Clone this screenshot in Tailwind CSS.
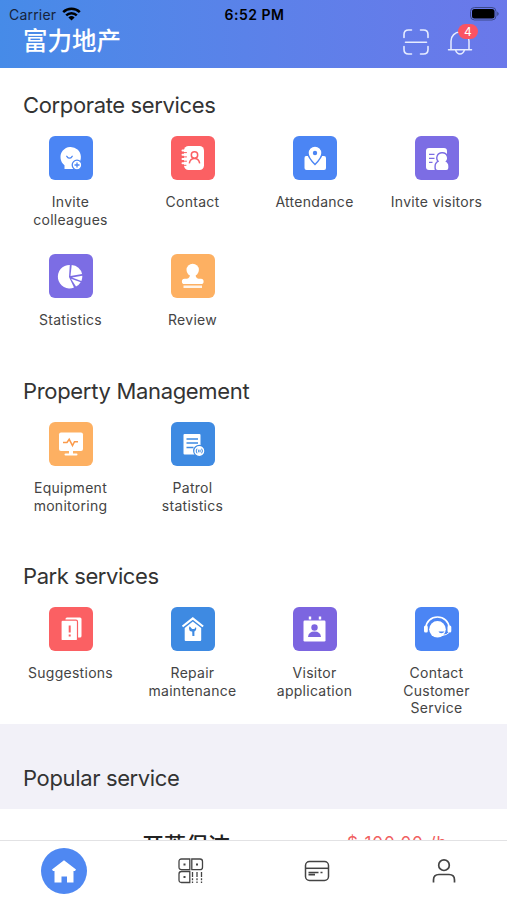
<!DOCTYPE html>
<html lang="en">
<head>
    <meta charset="UTF-8">
    <meta name="viewport" content="width=device-width, initial-scale=1.0">
    <title>富力地产</title>
    <script src="https://cdn.jsdelivr.net/npm/@tailwindcss/browser@4"></script>
</head>
<body class="bg-white font-['Inter','Noto_Sans_CJK_SC',sans-serif] text-[#333]">
    <div class="flex flex-col h-[900px] overflow-hidden">

        <!-- Header -->
        <header class="h-[68px] shrink-0 bg-linear-to-r from-[#468be8] to-[#6a78ea]">
            <div class="grid grid-cols-3 items-center h-7 pl-[9px] pr-[7px] text-black">
                <div class="flex items-center gap-1.5 text-[14px] tracking-[0.2px]">
                    <span class="text-[#16233c]">Carrier</span>
                    <svg class="w-[19px] h-[14px]" viewBox="0 0 19 14" fill="none" stroke="currentColor" stroke-width="2.5">
                        <path d="M1.2 5.2a11.8 11.8 0 0 1 16.6 0M4.2 8.4a7.6 7.6 0 0 1 10.6 0"/>
                        <path d="M9.5 13.6 6.4 10.5a4.5 4.5 0 0 1 6.2 0z" fill="currentColor" stroke="none"/>
                    </svg>
                </div>
                <div class="text-center text-[14px] font-semibold tracking-[0.5px]">6:52 PM</div>
                <svg class="justify-self-end w-[30px] h-[14px]" viewBox="0 0 30 14">
                    <rect x=".5" y=".5" width="25.5" height="12.5" rx="4" fill="none" stroke="#3c4a8c"/>
                    <rect x="2" y="2" width="22.5" height="9.5" rx="2.5"/>
                    <path d="M27.2 4.5q3 2.3 0 4.6z" fill="#3c4a8c"/>
                </svg>
            </div>
            <div class="flex items-center h-[27px] pl-[23px] pr-[34px] text-white">
                <h1 class="text-[24.5px] leading-[27px] font-medium">富力地产</h1>
                <svg class="ml-auto w-[26px] h-[26px]" viewBox="0 0 26 26" fill="none" stroke="#e6ecff" stroke-width="1.6" stroke-linecap="round">
                    <path d="M1 8.500V5.500q0-4.500 4.500-4.500H8.500M17.500 1H20.500q4.500 0 4.500 4.500V8.500M25 17.500V20.500q0 4.500-4.500 4.500H17.500M8.500 25H5.500Q1 25 1 20.500V17.500M2.500 13.300h21"/>
                </svg>
                <div class="relative ml-[18px]">
                    <svg class="w-[26px] h-[26px]" viewBox="0 0 26 26" fill="none" stroke="#e6ecff" stroke-width="1.5" stroke-linecap="round">
                        <path d="M1.500 20.700H24.500M4 20.500V12a9 9 0 0 1 18 0v8.500M8.500 21q1.500 4 4.500 4t4.500-4"/>
                    </svg>
                    <span class="absolute left-[11px] -top-[5px] w-5 h-[15px] rounded-full bg-[#fb5363] text-center text-[12px] leading-[15px]">4</span>
                </div>
            </div>
        </header>

        <!-- Services -->
        <main class="grow min-h-0 overflow-hidden">
            <section class="pt-[22px]">
                <h2 class="pl-[23px] text-[22px] leading-[30px] tracking-[-0.36px]">Corporate services</h2>
                <div class="grid grid-cols-4 gap-y-[26px] mt-4 mx-[9.5px] text-center text-[14px] leading-[17.5px] tracking-[0.28px] text-[#444]">
                    <div class="flex flex-col items-center gap-[13px]">
                        <svg class="w-11 h-11 rounded-md bg-[#4b85f4]" viewBox="0 0 44 44" fill="#fff">
                            <path d="M15.500 33v-3.800a10.200 10.200 0 1 1 13.500-1V33z"/>
                            <path d="M17.800 20.300q2.700 3.800 5.400 0" fill="none" stroke="#4b85f4" stroke-width="1.300" stroke-linecap="round"/>
                            <circle cx="28" cy="29" r="4.800" stroke="#4b85f4" stroke-width="1.300"/>
                            <path d="M25.500 29h5M28 26.500v5" stroke="#4b85f4" stroke-width="1.300"/>
                        </svg>
                        <span>Invite<br>colleagues</span>
                    </div>
                    <div class="flex flex-col items-center gap-[13px]">
                        <svg class="w-11 h-11 rounded-md bg-[#fb6063]" viewBox="0 0 44 44" fill="none" stroke="#fb6063">
                            <rect x="13" y="10" width="20" height="24" rx="4.500" fill="#fff" stroke="none"/>
                            <path d="M11.500 14.500h4M11.500 18.700h4M11.500 23h4M11.500 27.300h4" stroke="#fff" stroke-width="2" stroke-linecap="round"/>
                            <path d="M12 16.600h3.500M12 20.900h3.500M12 25.200h3.500M12 29.300h3" stroke-width="1" stroke-linecap="round"/>
                            <circle cx="23.500" cy="19" r="3.200" stroke-width="1.500"/>
                            <path d="M18.300 27.300q1-4.800 5.200-4.800t5.200 4.800" stroke-width="1.500"/>
                        </svg>
                        <span>Contact</span>
                    </div>
                    <div class="flex flex-col items-center gap-[13px]">
                        <svg class="w-11 h-11 rounded-md bg-[#4b85f4]" viewBox="0 0 44 44" fill="#fff">
                            <path d="M13 20h18q2 0 2 2v10q0 2-2 2H13.500q-2 0-2-2V22q0-2 1.500-2z"/>
                            <path d="M22 28.500q-7-7-7-11.500a7 7 0 0 1 14 0q0 4.500-7 11.500z" stroke="#4b85f4" stroke-width="1.400"/>
                            <circle cx="22" cy="17" r="2.200" fill="#4b85f4"/>
                        </svg>
                        <span>Attendance</span>
                    </div>
                    <div class="flex flex-col items-center gap-[13px]">
                        <svg class="w-11 h-11 rounded-md bg-[#7c6de4]" viewBox="0 0 44 44" fill="#fff">
                            <path d="M14 12h15q3 0 3 3v13l-6 6H14q-3 0-3-3V15q0-3 3-3z"/>
                            <path d="M14 18.300h5.500M14 22.300h5.500M14 26.300h3.500" stroke="#7c6de4" stroke-width="1.300"/>
                            <path d="M27.300 17.500a4.500 4.500 0 0 1 3 8q3 1.500 3 4.500v2q0 2-2 2h-8.500q-2 0-2-2v-2q0-3 3.400-4.500a4.500 4.500 0 0 1 3.100-8z" stroke="#7c6de4" stroke-width="2.800" paint-order="stroke"/>
                        </svg>
                        <span>Invite visitors</span>
                    </div>
                    <div class="flex flex-col items-center gap-[13px]">
                        <svg class="w-11 h-11 rounded-md bg-[#7c6de4]" viewBox="0 0 44 44" fill="#fff">
                            <path d="M20.800 11a11.700 11.700 0 1 0 4.200 22.500L20 23z"/>
                            <path d="M22.700 11a11.500 11.500 0 0 1 10.400 9L21.500 22z"/>
                            <path d="M33.300 21.700a11 11 0 0 1-.9 5.200L23 23.500z"/>
                            <path d="M31.700 28.200a11 11 0 0 1-4.700 4.300L22 24.700z"/>
                        </svg>
                        <span>Statistics</span>
                    </div>
                    <div class="flex flex-col items-center gap-[13px]">
                        <svg class="w-11 h-11 rounded-md bg-[#fdb062]" viewBox="0 0 44 44" fill="#fff">
                            <circle cx="21.700" cy="16" r="6.200"/>
                            <path d="M19 20h5.500q0 4.300 3 4.800H30a2.600 2.600 0 0 1 0 5.200H13.500a2.600 2.600 0 0 1 0-5.200H16q3-.5 3-4.800z"/>
                            <path d="M12.500 31.500h18.500v2.500h-18.500z" opacity=".85"/>
                        </svg>
                        <span>Review</span>
                    </div>
                </div>
            </section>

            <section class="pt-[47.5px]">
                <h2 class="pl-[23px] text-[22px] leading-[30px] tracking-[-0.32px]">Property Management</h2>
                <div class="grid grid-cols-4 mt-4 mx-[9.5px] text-center text-[14px] leading-[17.5px] tracking-[0.28px] text-[#444]">
                    <div class="flex flex-col items-center gap-[13px]">
                        <svg class="w-11 h-11 rounded-md bg-[#fdb062]" viewBox="0 0 44 44" fill="#fff">
                            <rect x="10" y="10.500" width="24" height="18.500" rx="2"/>
                            <path d="M20 29h4v2.500h3.500q1 0 1 1t-1 1h-11q-1 0-1-1t1-1H20z"/>
                            <path d="M14 20.500h4l2.200-3.200 3.300 6.400 2-4h3.500" fill="none" stroke="#fb9a4a" stroke-width="1.500"/>
                        </svg>
                        <span>Equipment<br>monitoring</span>
                    </div>
                    <div class="flex flex-col items-center gap-[13px]">
                        <svg class="w-11 h-11 rounded-md bg-[#3e8ae2]" viewBox="0 0 44 44" fill="#fff">
                            <rect x="12.500" y="12" width="17" height="20.500" rx="1"/>
                            <path d="M15.500 17h11.500M15.500 21h11.500M15.500 25.500h7" stroke="#3e8ae2" stroke-width="1.300"/>
                            <circle cx="28.300" cy="29" r="5.600" stroke="#3e8ae2" stroke-width="1.200"/>
                            <path d="M26 26.700q-1.700 2.300 0 4.600M30.600 26.700q1.700 2.300 0 4.600M27.700 27.700v2.600M29.100 27.700v2.600" fill="none" stroke="#3e8ae2"/>
                        </svg>
                        <span>Patrol<br>statistics</span>
                    </div>
                </div>
            </section>

            <section class="pt-[47px] pb-[7.5px]">
                <h2 class="pl-[23px] text-[22px] leading-[30px] tracking-[-0.42px]">Park services</h2>
                <div class="grid grid-cols-4 mt-4 mx-[9.5px] text-center text-[14px] leading-[17.5px] tracking-[0.28px] text-[#444]">
                    <div class="flex flex-col items-center gap-[13px]">
                        <svg class="w-11 h-11 rounded-md bg-[#fb6063]" viewBox="0 0 44 44" fill="#fff">
                            <rect x="16.500" y="10.500" width="16" height="20" rx="1.500"/>
                            <rect x="12" y="13.200" width="16.500" height="20.500" rx="1.500" stroke="#fb6063" stroke-width="1.200"/>
                            <path d="M20.700 18.500v7M20.700 27.500v2" stroke="#fb6063" stroke-width="2"/>
                        </svg>
                        <span>Suggestions</span>
                    </div>
                    <div class="flex flex-col items-center gap-[13px]">
                        <svg class="w-11 h-11 rounded-md bg-[#3e8ae2]" viewBox="0 0 44 44" fill="#fff">
                            <path d="m11.500 19.500 10.300-8 10.300 8" fill="none" stroke="#fff" stroke-width="2.200"/>
                            <path d="m21.800 14.500 8.400 6.500v12q0 1-1 1H14.700q-1 0-1-1V21z"/>
                            <path d="M18.700 19.200q-1.700 2.300-.2 4.300 1.300 1.200 2.700.9l.2 4.600h2v-4.500q2.500-1.300 1.600-4.600l-1.700 2h-2.200z" fill="#3e8ae2"/>
                        </svg>
                        <span>Repair<br>maintenance</span>
                    </div>
                    <div class="flex flex-col items-center gap-[13px]">
                        <svg class="w-11 h-11 rounded-md bg-[#7c65e0]" viewBox="0 0 44 44" fill="#fff">
                            <rect x="10.500" y="13.500" width="22" height="21" rx="1.200"/>
                            <path d="M17 9.500v3M27 9.500v3" stroke="#fff" stroke-width="2.400"/>
                            <circle cx="21.500" cy="20.500" r="3.200" fill="#7c65e0"/>
                            <path d="M15 30q.5-5.500 6.500-5.500T28 30z" fill="#7c65e0"/>
                        </svg>
                        <span>Visitor<br>application</span>
                    </div>
                    <div class="flex flex-col items-center gap-[13px]">
                        <svg class="w-11 h-11 rounded-md bg-[#4b85f4]" viewBox="0 0 44 44" fill="#fff">
                            <path d="M11 20.500a11.500 10.500 0 0 1 23 0" fill="none" stroke="#fff" stroke-width="1.700"/>
                            <rect x="9" y="18.500" width="3.800" height="7" rx="1.500"/>
                            <rect x="32.500" y="18.500" width="3.800" height="7" rx="1.500"/>
                            <circle cx="22.500" cy="22.300" r="8.300"/>
                            <path d="M34 25.500q-2.500 2.700-6 2.700" fill="none" stroke="#fff"/>
                            <path d="M23.500 24.500h6q-1 1.700-3.200 1.700t-2.800-1.700z" fill="#4b85f4"/>
                        </svg>
                        <span>Contact<br>Customer<br>Service</span>
                    </div>
                </div>
            </section>

            <div class="h-[85px] pt-[39px] pl-[23px] bg-[#f2f1f8]">
                <h2 class="text-[22px] leading-[30px] tracking-[-0.36px]">Popular service</h2>
            </div>
            <div class="flex items-start pt-5 pl-[142px] leading-[32px]">
                <span class="w-[205px] text-[22px] font-medium text-[#222]">开荒保洁</span>
                <span class="-mt-0.5 text-[17px] tracking-[0.9px] text-[#f0605f]">$ 100.00 /h</span>
            </div>
        </main>

        <!-- Tab bar -->
        <nav class="grid grid-cols-4 h-[60px] shrink-0 border-t border-[#e2e2e4] bg-white text-[#444]">
            <a class="flex items-center justify-center pl-px pt-px">
                <svg class="w-[46px] h-[46px] rounded-full bg-[#4f88f2]" viewBox="0 0 46 46" fill="#fff">
                    <path d="M23 12.200 35 21.500l-1 1.500h-1.500v11.500H26v-6h-5.500v6H13.500V23H12l-1-1.500z"/>
                </svg>
            </a>
            <a class="flex items-center justify-center pl-px pt-px">
                <svg class="w-[26px] h-[26px]" viewBox="0 0 26 26" fill="none" stroke="currentColor" stroke-width="1.300">
                    <path d="M3.500 1h8.300v10.700H3.500Q1 11.700 1 9.200V3.500Q1 1 3.500 1zM13.800 1H22q2.500 0 2.500 2.500v5.700q0 2.500-2.500 2.500h-8.200zM3.500 13.500h8.300v11H3.500Q1 24.500 1 22v-6q0-2.500 2.500-2.500z"/>
                    <path d="M5.500 6.500h2M18 6.500h2M5.500 19h2" stroke-width="2"/>
                    <path d="M14.500 14v11M19 14v11M23.500 14v11" stroke-dasharray="5 1.300 2 1.300"/>
                </svg>
            </a>
            <a class="flex items-center justify-center pt-px">
                <svg class="w-[26px] h-[26px]" viewBox="0 0 26 26" fill="none" stroke="currentColor" stroke-width="1.500">
                    <rect x="1.500" y="3.500" width="23" height="19" rx="4"/>
                    <path d="M1.500 10.300h23"/>
                    <path d="M4.500 14.500h10M4.500 16.700h6.500M16.500 14.500h2" stroke-width="1.700"/>
                </svg>
            </a>
            <a class="flex items-center justify-center pt-px">
                <svg class="w-[26px] h-[26px]" viewBox="0 0 26 26" fill="none" stroke="currentColor" stroke-width="1.700">
                    <circle cx="13" cy="7.200" r="5.300"/>
                    <path d="M2.500 24.500V22q0-5.500 5.500-5.500h10q5.500 0 5.500 5.500v2.500"/>
                </svg>
            </a>
        </nav>
    </div>
</body>
</html>
